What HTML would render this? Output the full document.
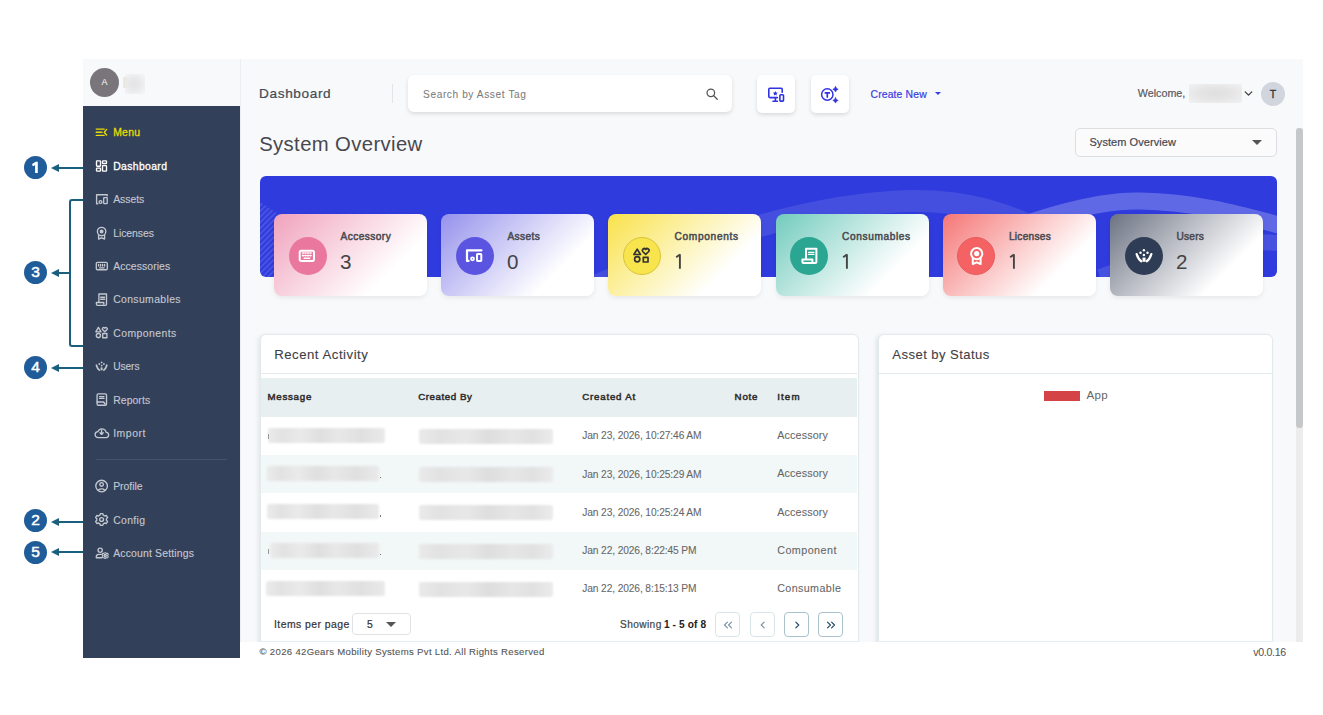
<!DOCTYPE html>
<html><head><meta charset="utf-8">
<style>
*{margin:0;padding:0;box-sizing:border-box}
html,body{width:1323px;height:715px;overflow:hidden;background:#fff;font-family:"Liberation Sans",sans-serif}
.a{position:absolute}
.t{position:absolute;white-space:nowrap;line-height:1}
.bub{position:absolute;left:24px;width:23px;height:23px;border-radius:50%;background:#1f5c99;color:#fff;font-size:15.5px;font-weight:normal;-webkit-text-stroke:.5px #fff;text-align:center;line-height:22px}
.arr{position:absolute;height:2px;background:#1a5f7e}
.head{position:absolute;width:0;height:0;border-top:4px solid transparent;border-bottom:4px solid transparent;border-right:8px solid #1a5f7e}
</style></head><body>

<div class="bub" style="top:155.5px"><svg width="23" height="23" style="position:absolute;left:0;top:0"><path d="M13.8 5.7v11.2h-2.7V9.2l-2.4 1.1-.6-2.2 3.6-2.4z" fill="#fff"/></svg></div>
<div class="head" style="left:51px;top:164px"></div>
<div class="arr" style="left:58px;width:25px;top:167px"></div>
<div class="bub" style="top:261.0px">3</div>
<div class="head" style="left:51px;top:268.5px"></div>
<div class="arr" style="left:58px;width:12px;top:271.5px"></div>
<div class="a" style="left:69px;top:199px;width:14px;height:148px;border:2px solid #1a5f7e;border-right:none;border-radius:3px 0 0 3px"></div>
<div class="bub" style="top:355.5px">4</div>
<div class="head" style="left:51px;top:363.5px"></div>
<div class="arr" style="left:58px;width:25px;top:366.5px"></div>
<div class="bub" style="top:509.0px">2</div>
<div class="head" style="left:51px;top:517.5px"></div>
<div class="arr" style="left:58px;width:25px;top:520.5px"></div>
<div class="bub" style="top:540.5px">5</div>
<div class="head" style="left:51px;top:548px"></div>
<div class="arr" style="left:58px;width:25px;top:551px"></div>
<div class="a" style="left:83px;top:59px;width:157px;height:599px;background:#334059"></div>
<div class="a" style="left:83px;top:59px;width:157px;height:47px;background:#f8f9fb"></div>
<div class="a" style="left:90px;top:68px;width:29px;height:29px;border-radius:50%;background:#7a757b;color:#fff;font-size:9px;text-align:center;line-height:29px">A</div>
<div class="a" style="left:125px;top:74px;width:20px;height:20px;background:radial-gradient(ellipse at 45% 50%,#e3e3e5 0%,#e9e9eb 40%,#f6f7f9 100%)"></div>
<div class="a" style="left:123px;top:77px;width:4px;height:11px;background:#ebe9e6"></div>
<div class="t" style="left:113.18px;top:128.13px;font-size:10.43px;color:#e8dc08;letter-spacing:0.251px;-webkit-text-stroke:0.3px #e8dc08;">Menu</div>
<svg class="a" style="left:92px;top:122px;color:#e8dc08;" width="20" height="20" viewBox="0 0 20 20" fill="none" stroke="currentColor" stroke-width="1.35" stroke-linecap="round" stroke-linejoin="round"><path d="M4.2 7.1h8M4.2 10.2h5.8M4.2 13.3h8M14.6 7.4L12.2 10.2l2.4 2.8"/></svg>
<div class="t" style="left:113.18px;top:161.63px;font-size:10.43px;color:#ffffff;letter-spacing:0.354px;-webkit-text-stroke:0.3px #ffffff;">Dashboard</div>
<svg class="a" style="left:92px;top:156px;color:#ffffff;" width="20" height="20" viewBox="0 0 20 20" fill="none" stroke="currentColor" stroke-width="1.35" stroke-linecap="round" stroke-linejoin="round"><rect x="4.5" y="4.8" width="4" height="5.4" rx=".6"/><rect x="10.5" y="4.8" width="4" height="2.7" rx=".6"/><rect x="4.5" y="12.1" width="4" height="3" rx=".6"/><rect x="10.5" y="9.6" width="4" height="5.5" rx=".6"/></svg>
<div class="t" style="left:113.18px;top:194.93px;font-size:10.43px;color:#c3c8d1;letter-spacing:-0.050px;-webkit-text-stroke:0.12px #c3c8d1;">Assets</div>
<svg class="a" style="left:92px;top:189px;color:#c3c8d1;" width="20" height="20" viewBox="0 0 20 20" fill="none" stroke="currentColor" stroke-width="1.35" stroke-linecap="round" stroke-linejoin="round"><path d="M15.2 6.8V5.7H4.6v9h1.2"/><rect x="11.7" y="8.6" width="3.5" height="6" rx=".5"/><circle cx="8.5" cy="13" r="1.4"/></svg>
<div class="t" style="left:113.18px;top:228.53px;font-size:10.43px;color:#c3c8d1;letter-spacing:-0.044px;-webkit-text-stroke:0.12px #c3c8d1;">Licenses</div>
<svg class="a" style="left:92px;top:223px;color:#c3c8d1;" width="20" height="20" viewBox="0 0 20 20" fill="none" stroke="currentColor" stroke-width="1.35" stroke-linecap="round" stroke-linejoin="round"><circle cx="9.6" cy="8.5" r="4.2"/><circle cx="9.6" cy="8.5" r="1.3" fill="currentColor"/><path d="M6.6 11.8v4.2l3-1.2 3 1.2v-4.2"/></svg>
<div class="t" style="left:113.18px;top:261.93px;font-size:10.43px;color:#c3c8d1;letter-spacing:0.084px;-webkit-text-stroke:0.12px #c3c8d1;">Accessories</div>
<svg class="a" style="left:92px;top:256px;color:#c3c8d1;" width="20" height="20" viewBox="0 0 20 20" fill="none" stroke="currentColor" stroke-width="1.35" stroke-linecap="round" stroke-linejoin="round"><rect x="4.3" y="6.3" width="11" height="7.4" rx="1.2"/><path d="M6.6 8.4v1.6M8.6 8.4v1.6M10.6 8.4v1.6M12.6 8.4v1.6M7.5 11.8h4.6"/></svg>
<div class="t" style="left:113.18px;top:295.33px;font-size:10.43px;color:#c3c8d1;letter-spacing:0.360px;-webkit-text-stroke:0.12px #c3c8d1;">Consumables</div>
<svg class="a" style="left:92px;top:290px;color:#c3c8d1;" width="20" height="20" viewBox="0 0 20 20" fill="none" stroke="currentColor" stroke-width="1.35" stroke-linecap="round" stroke-linejoin="round"><path d="M6.9 12.5V4h7.6v10.3a1 1 0 0 1-1 1H5.6a1.2 1.2 0 0 1-1.2-1.2v-1.6h7.4v1.6"/><path d="M8.7 7.2h3.9M8.7 9.2h3.9"/></svg>
<div class="t" style="left:113.18px;top:328.73px;font-size:10.43px;color:#c3c8d1;letter-spacing:0.449px;-webkit-text-stroke:0.12px #c3c8d1;">Components</div>
<svg class="a" style="left:92px;top:323px;color:#c3c8d1;" width="20" height="20" viewBox="0 0 20 20" fill="none" stroke="currentColor" stroke-width="1.35" stroke-linecap="round" stroke-linejoin="round"><path d="M6.4 4.4L9 8.8H3.8z"/><path d="M12.8 8.8l-2.3-2.2a1.3 1.3 0 0 1 2.3-1.4 1.3 1.3 0 0 1 2.3 1.4z"/><circle cx="6.4" cy="12.6" r="2.1"/><rect x="10.7" y="10.5" width="4.2" height="4.2"/></svg>
<div class="t" style="left:113.19px;top:362.42px;font-size:10.21px;color:#c3c8d1;letter-spacing:-0.080px;-webkit-text-stroke:0.12px #c3c8d1;">Users</div>
<svg class="a" style="left:92px;top:356px;color:#c3c8d1;" width="20" height="20" viewBox="0 0 20 20" fill="none" stroke="currentColor" stroke-width="1.35" stroke-linecap="round" stroke-linejoin="round"><circle cx="9.6" cy="6.4" r=".9" fill="currentColor" stroke="none"/><circle cx="7.3" cy="8" r=".9" fill="currentColor" stroke="none"/><circle cx="11.9" cy="8" r=".9" fill="currentColor" stroke="none"/><circle cx="9.6" cy="9.6" r=".9" fill="currentColor" stroke="none"/><path d="M4.4 9.2Q5.3 12.6 7.4 14.1M14.8 9.2Q13.9 12.6 11.8 14.1" stroke-width="1.7"/><rect x="8.6" y="11.4" width="2" height="2.9" fill="currentColor" stroke="none"/></svg>
<div class="t" style="left:113.18px;top:395.53px;font-size:10.43px;color:#c3c8d1;letter-spacing:0.072px;-webkit-text-stroke:0.12px #c3c8d1;">Reports</div>
<svg class="a" style="left:92px;top:389px;color:#c3c8d1;" width="20" height="20" viewBox="0 0 20 20" fill="none" stroke="currentColor" stroke-width="1.35" stroke-linecap="round" stroke-linejoin="round"><rect x="5.1" y="4.8" width="9.4" height="11.4" rx="1.2"/><path d="M7.6 7.6h4.4M7.6 9.4h4.4M5.1 13h6.5l1.5 2"/></svg>
<div class="t" style="left:113.18px;top:429.13px;font-size:10.43px;color:#c3c8d1;letter-spacing:0.537px;-webkit-text-stroke:0.12px #c3c8d1;">Import</div>
<svg class="a" style="left:92px;top:423px;color:#c3c8d1;" width="20" height="20" viewBox="0 0 20 20" fill="none" stroke="currentColor" stroke-width="1.35" stroke-linecap="round" stroke-linejoin="round"><path d="M6.2 14.6h7.6a2.6 2.6 0 0 0 .4-5.2 4.3 4.3 0 0 0-8.2-.8 3 3 0 0 0 .2 6z"/><path d="M9.6 6.8v4.4M8 9.8l1.6 1.6 1.6-1.6"/></svg>
<div class="t" style="left:113.18px;top:482.13px;font-size:10.43px;color:#c3c8d1;letter-spacing:-0.019px;-webkit-text-stroke:0.12px #c3c8d1;">Profile</div>
<svg class="a" style="left:92px;top:476px;color:#c3c8d1;" width="20" height="20" viewBox="0 0 20 20" fill="none" stroke="currentColor" stroke-width="1.35" stroke-linecap="round" stroke-linejoin="round"><circle cx="9.6" cy="10" r="5.8"/><circle cx="9.6" cy="8.4" r="1.8"/><path d="M6.6 14a3.4 2.2 0 0 1 6 0"/></svg>
<div class="t" style="left:113.18px;top:515.63px;font-size:10.43px;color:#c3c8d1;letter-spacing:0.358px;-webkit-text-stroke:0.12px #c3c8d1;">Config</div>
<svg class="a" style="left:92px;top:509px;color:#c3c8d1;" width="20" height="20" viewBox="0 0 20 20" fill="none" stroke="currentColor" stroke-width="1.35" stroke-linecap="round" stroke-linejoin="round"><circle cx="9.6" cy="10.5" r="1.9"/><path d="M8.4 4.6h2.4l.5 1.6 1.5.8 1.6-.5 1.2 2-1.2 1.2v1.6l1.2 1.2-1.2 2-1.6-.5-1.5.8-.5 1.6H8.4l-.5-1.6-1.5-.8-1.6.5-1.2-2 1.2-1.2V9.7L3.6 8.5l1.2-2 1.6.5 1.5-.8z"/></svg>
<div class="t" style="left:113.18px;top:548.93px;font-size:10.43px;color:#c3c8d1;letter-spacing:0.174px;-webkit-text-stroke:0.12px #c3c8d1;">Account Settings</div>
<svg class="a" style="left:92px;top:543px;color:#c3c8d1;" width="20" height="20" viewBox="0 0 20 20" fill="none" stroke="currentColor" stroke-width="1.35" stroke-linecap="round" stroke-linejoin="round"><circle cx="8.2" cy="7.2" r="2.1"/><path d="M9.5 11.3H6.8a2.5 2.5 0 0 0-2.5 2.5v.9h5.2"/><circle cx="13.2" cy="12.6" r="1.1"/><path d="M13.2 9.6l1.2.75h1.2l.6 1.1-.6 1.15.6 1.1-.6 1.1h-1.2l-1.2.75-1.2-.75h-1.2l-.6-1.1.6-1.1-.6-1.15.6-1.1h1.2z" stroke-width="1.1"/></svg>
<div class="a" style="left:96px;top:459px;width:131px;height:1px;background:#46536a"></div>
<div class="a" style="left:240px;top:59px;width:1063px;height:583px;background:#f8f9fb;overflow:hidden;border-left:1px solid #eceef2"></div>
<div class="t" style="left:259.12px;top:87.02px;font-size:13.62px;color:#464b55;letter-spacing:0.620px;-webkit-text-stroke:0.22px #464b55;">Dashboard</div>
<div class="a" style="left:392px;top:84px;width:1px;height:19px;background:#e2e4e8"></div>
<div class="a" style="left:408px;top:75px;width:324px;height:37px;background:#fff;border-radius:6px;box-shadow:0 2px 4px rgba(0,0,0,.12)"></div>
<div class="t" style="left:423.09px;top:89.88px;font-size:10.14px;color:#7a7a7a;letter-spacing:0.594px;-webkit-text-stroke:0.05px #7a7a7a;">Search by Asset Tag</div>
<svg class="a" style="left:705px;top:87px;color:#555;" width="14" height="14" viewBox="0 0 24 24" fill="none" stroke="currentColor" stroke-width="2.2" stroke-linecap="round" stroke-linejoin="round"><circle cx="10" cy="10" r="6.5"/><path d="M15 15l6 6"/></svg>
<div class="a" style="left:757px;top:75px;width:38px;height:38px;background:#fff;border-radius:5px;box-shadow:0 2px 4px rgba(0,0,0,.12)"></div>
<div class="a" style="left:811px;top:75px;width:38px;height:38px;background:#fff;border-radius:5px;box-shadow:0 2px 4px rgba(0,0,0,.12)"></div>
<svg class="a" style="left:762px;top:82px;color:#2f33e2;" width="28" height="26" viewBox="0 0 28 26" fill="none" stroke="currentColor" stroke-width="1.6" stroke-linecap="round" stroke-linejoin="round"><path d="M15.4 15.6H7.8a1 1 0 0 1-1-1V7.3a1 1 0 0 1 1-1h11.4a1 1 0 0 1 1 1v3"/><path d="M13.4 15.8v3.4M11 19.3h4.4"/><rect x="17.9" y="12.8" width="3.6" height="6.3" rx=".8"/><path d="M13.3 9l.75 1.55 1.7.2-1.25 1.15.35 1.7-1.55-.85-1.55.85.35-1.7-1.25-1.15 1.7-.2z" fill="currentColor" stroke="none"/></svg>
<svg class="a" style="left:816px;top:82px;color:#2f33e2;" width="28" height="26" viewBox="0 0 28 26" fill="none" stroke="currentColor" stroke-width="1.5" stroke-linecap="round" stroke-linejoin="round"><circle cx="11.3" cy="12.5" r="5.7"/><path d="M9.3 10.9h4M11.3 10.9v4.2" stroke-width="1.7"/><path d="M19.5 4.6q.5 2.2 2.7 2.7-2.2.5-2.7 2.7-.5-2.2-2.7-2.7 2.2-.5 2.7-2.7zM19.5 15.7q.5 2.2 2.7 2.7-2.2.5-2.7 2.7-.5-2.2-2.7-2.7 2.2-.5 2.7-2.7z" fill="currentColor" stroke="currentColor" stroke-width=".6"/></svg>
<div class="t" style="left:870.48px;top:89.83px;font-size:10.43px;color:#3a3de0;letter-spacing:0.133px;-webkit-text-stroke:0.2px #3a3de0;">Create New</div>
<div class="a" style="left:935px;top:92px;width:0;height:0;border-left:3px solid transparent;border-right:3px solid transparent;border-top:3px solid #3a3de0"></div>
<div class="t" style="left:1137.86px;top:88.38px;font-size:10.72px;color:#5a5a60;letter-spacing:-0.003px;-webkit-text-stroke:0.2px #5a5a60;">Welcome,</div>
<div class="a" style="left:1189px;top:84px;width:53px;height:19px;background:radial-gradient(ellipse at 50% 50%,#e0dfdf 0%,#e6e5e5 45%,#f1f2f4 100%)"></div>
<svg class="a" style="left:1242px;top:87px;color:#444;" width="13" height="13" viewBox="0 0 24 24" fill="none" stroke="currentColor" stroke-width="2.6" stroke-linecap="round" stroke-linejoin="round"><path d="M6 9l6 6 6-6"/></svg>
<div class="a" style="left:1261px;top:82px;width:24px;height:24px;border-radius:50%;background:#d1d5dd;color:#333;font-size:10.5px;-webkit-text-stroke:.3px #333;text-align:center;line-height:24px">T</div>
<div class="t" style="left:259.19px;top:133.95px;font-size:20.29px;color:#48484f;letter-spacing:0.376px;">System Overview</div>
<div class="a" style="left:1075px;top:128px;width:202px;height:29px;border:1px solid #dcdee2;border-radius:5px;background:#fbfbfc"></div>
<div class="t" style="left:1089.45px;top:137.04px;font-size:11.01px;color:#48484f;letter-spacing:0.064px;-webkit-text-stroke:0.2px #48484f;">System Overview</div>
<div class="a" style="left:1252px;top:140px;width:0;height:0;border-left:5px solid transparent;border-right:5px solid transparent;border-top:5px solid #555"></div>
<div class="a" style="left:1296px;top:128px;width:7px;height:514px;background:#ececec"></div>
<div class="a" style="left:1296px;top:128px;width:7px;height:300px;background:#c6c7c9;border-radius:4px"></div>
<div class="a" style="left:260px;top:176px;width:1017px;height:101px;background:#2f3bdd;border-radius:6px;overflow:hidden"><svg width="1017" height="101" style="position:absolute;left:0;top:0"><defs><pattern id="hp" width="4" height="4" patternUnits="userSpaceOnUse" patternTransform="rotate(45)"><rect width="2" height="4" fill="#fff" fill-opacity=".12"/></pattern></defs><path d="M0 26 L18 38 L18 101 L0 101z" fill="url(#hp)"/><g fill="none" stroke="#fff"><path d="M330 112 C430 70 540 28 650 25 C710 24 745 38 790 58" stroke-opacity=".10" stroke-width="22"/><path d="M700 72 C770 45 830 24 880 25 C940 26 985 40 1030 52" stroke-opacity=".24" stroke-width="17"/><path d="M840 101 C900 80 960 60 1030 68" stroke-opacity=".12" stroke-width="16"/></g></svg></div>
<div class="a" style="left:274px;top:214px;width:153px;height:82px;border-radius:8px;background:linear-gradient(135deg,#f0a2bd 0%,#fff 74%);box-shadow:0 2px 5px rgba(0,0,0,.07)"></div>
<div class="a" style="left:288.5px;top:236.5px;width:38px;height:38px;border-radius:50%;background:#e9779e;"></div>
<svg class="a" style="left:287px;top:235px;color:#fff;" width="40" height="40" viewBox="0 0 40 40" fill="none" stroke="currentColor" stroke-width="1.7" stroke-linecap="round" stroke-linejoin="round"><rect x="12.7" y="15.8" width="14.3" height="10.1" rx="1.6" stroke-width="2"/><path d="M15.5 18h1M18 18h1M20.5 18h1M23 18h1M15.5 20.6h1M18 20.6h1M20.5 20.6h1M23 20.6h1M17.2 23.3h5.4" stroke-width="1.6"/></svg>
<div class="t" style="left:340.49px;top:231.98px;font-size:10.14px;color:#4a4a50;letter-spacing:0.438px;-webkit-text-stroke:0.5px #4a4a50;">Accessory</div>
<div class="t" style="left:339.97px;top:252.01px;font-size:20.58px;color:#444;letter-spacing:0.000px;">3</div>
<div class="a" style="left:441px;top:214px;width:153px;height:82px;border-radius:8px;background:linear-gradient(135deg,#9591ec 0%,#fff 74%);box-shadow:0 2px 5px rgba(0,0,0,.07)"></div>
<div class="a" style="left:455.5px;top:236.5px;width:38px;height:38px;border-radius:50%;background:#5a54e0;"></div>
<svg class="a" style="left:454px;top:235px;color:#fff;" width="40" height="40" viewBox="0 0 40 40" fill="none" stroke="currentColor" stroke-width="1.7" stroke-linecap="round" stroke-linejoin="round"><path d="M27.5 15.3H13v10.6h1.6" stroke-width="2.2"/><rect x="23" y="18.9" width="4.3" height="7" rx=".6" stroke-width="2"/><circle cx="18.5" cy="23.8" r="1.5" stroke-width="1.8"/></svg>
<div class="t" style="left:507.49px;top:231.98px;font-size:10.14px;color:#4a4a50;letter-spacing:0.364px;-webkit-text-stroke:0.5px #4a4a50;">Assets</div>
<div class="t" style="left:506.97px;top:252.01px;font-size:20.58px;color:#444;letter-spacing:0.000px;">0</div>
<div class="a" style="left:608px;top:214px;width:153px;height:82px;border-radius:8px;background:linear-gradient(135deg,#f9e24a 0%,#fff 74%);box-shadow:0 2px 5px rgba(0,0,0,.07)"></div>
<div class="a" style="left:622.5px;top:236.5px;width:38px;height:38px;border-radius:50%;background:#f8e44c;border:1px solid #d7c43a;"></div>
<svg class="a" style="left:621px;top:235px;color:#333;" width="40" height="40" viewBox="0 0 40 40" fill="none" stroke="currentColor" stroke-width="1.7" stroke-linecap="round" stroke-linejoin="round"><path d="M16.2 14.2L19.5 19.5H12.9z"/><path d="M24.7 19.4l-3-2.9a1.8 1.8 0 0 1 3-2.1 1.8 1.8 0 0 1 3 2.1z"/><circle cx="16.2" cy="24.3" r="2.6"/><rect x="22.3" y="22.3" width="4.7" height="4.7"/></svg>
<div class="t" style="left:674.49px;top:231.98px;font-size:10.14px;color:#4a4a50;letter-spacing:0.699px;-webkit-text-stroke:0.5px #4a4a50;">Components</div>
<svg class="a" style="left:672.6px;top:253px" width="10" height="17"><path d="M6.9 1.3V15.8M6.9 1.5L3.2 4.3" fill="none" stroke="#444" stroke-width="1.9" stroke-linecap="butt"/></svg>
<div class="a" style="left:775.5px;top:214px;width:153px;height:82px;border-radius:8px;background:linear-gradient(135deg,#72cbbd 0%,#fff 74%);box-shadow:0 2px 5px rgba(0,0,0,.07)"></div>
<div class="a" style="left:790.0px;top:236.5px;width:38px;height:38px;border-radius:50%;background:#2aa693;"></div>
<svg class="a" style="left:788.5px;top:235px;color:#fff;" width="40" height="40" viewBox="0 0 40 40" fill="none" stroke="currentColor" stroke-width="1.7" stroke-linecap="round" stroke-linejoin="round"><path d="M17 24.5V13.8h10.4v13.2a1 1 0 0 1-1 1H15a1.6 1.6 0 0 1-1.6-1.6v-2h10v2" stroke-width="2"/><path d="M19.5 17.3h5.5M19.5 19.3h5.5" stroke-width="1.3"/></svg>
<div class="t" style="left:841.99px;top:231.98px;font-size:10.14px;color:#4a4a50;letter-spacing:0.629px;-webkit-text-stroke:0.5px #4a4a50;">Consumables</div>
<svg class="a" style="left:840.1px;top:253px" width="10" height="17"><path d="M6.9 1.3V15.8M6.9 1.5L3.2 4.3" fill="none" stroke="#444" stroke-width="1.9" stroke-linecap="butt"/></svg>
<div class="a" style="left:942.5px;top:214px;width:153px;height:82px;border-radius:8px;background:linear-gradient(135deg,#f57676 0%,#fff 74%);box-shadow:0 2px 5px rgba(0,0,0,.07)"></div>
<div class="a" style="left:957.0px;top:236.5px;width:38px;height:38px;border-radius:50%;background:#f46263;border:1px solid #e85a5a;"></div>
<svg class="a" style="left:955.5px;top:235px;color:#fff;" width="40" height="40" viewBox="0 0 40 40" fill="none" stroke="currentColor" stroke-width="1.7" stroke-linecap="round" stroke-linejoin="round"><circle cx="20.7" cy="18.7" r="5.6" stroke-width="2"/><circle cx="20.7" cy="18.7" r="2.6" fill="currentColor" stroke="none"/><path d="M16.8 23v6l3.9-1.7 3.9 1.7v-6" stroke-width="2"/></svg>
<div class="t" style="left:1008.99px;top:231.98px;font-size:10.14px;color:#4a4a50;letter-spacing:0.249px;-webkit-text-stroke:0.5px #4a4a50;">Licenses</div>
<svg class="a" style="left:1007.1px;top:253px" width="10" height="17"><path d="M6.9 1.3V15.8M6.9 1.5L3.2 4.3" fill="none" stroke="#444" stroke-width="1.9" stroke-linecap="butt"/></svg>
<div class="a" style="left:1110px;top:214px;width:153px;height:82px;border-radius:8px;background:linear-gradient(135deg,#6b7282 0%,#fff 74%);box-shadow:0 2px 5px rgba(0,0,0,.07)"></div>
<div class="a" style="left:1124.5px;top:236.5px;width:38px;height:38px;border-radius:50%;background:#2f3c55;"></div>
<svg class="a" style="left:1124px;top:236px;color:#fff;" width="40" height="40" viewBox="0 0 40 40" fill="none" stroke="currentColor" stroke-width="1.7" stroke-linecap="round" stroke-linejoin="round"><circle cx="19.9" cy="14.3" r="1.25" fill="currentColor" stroke="none"/><circle cx="16.5" cy="16.8" r="1.25" fill="currentColor" stroke="none"/><circle cx="23.5" cy="16.8" r="1.25" fill="currentColor" stroke="none"/><circle cx="19.9" cy="19.1" r="1.25" fill="currentColor" stroke="none"/><path d="M12.7 18.1Q14.2 23.2 17.3 25.2M27.3 18.1Q25.8 23.2 22.7 25.2" stroke-width="2.3"/><rect x="18.5" y="21.6" width="3.1" height="4.2" fill="currentColor" stroke="none"/></svg>
<div class="t" style="left:1176.49px;top:231.98px;font-size:10.14px;color:#4a4a50;letter-spacing:0.239px;-webkit-text-stroke:0.5px #4a4a50;">Users</div>
<div class="t" style="left:1175.97px;top:252.01px;font-size:20.58px;color:#444;letter-spacing:0.000px;">2</div>
<div class="a" style="left:260px;top:334px;width:599px;height:320px;background:#fff;border:1px solid #e3eaee;border-radius:6px;box-shadow:-2px 1px 4px rgba(0,0,0,.08)"></div>
<div class="t" style="left:274.14px;top:348.39px;font-size:13.19px;color:#3f3f45;letter-spacing:0.517px;-webkit-text-stroke:0.1px #3f3f45;">Recent Activity</div>
<div class="a" style="left:261px;top:373px;width:596px;height:1px;background:#e3eaee"></div>
<div class="a" style="left:261px;top:378px;width:596px;height:39px;background:#e8eff1"></div>
<div class="t" style="left:267.41px;top:392.35px;font-size:9.71px;color:#2e2e2e;letter-spacing:0.751px;-webkit-text-stroke:0.5px #2e2e2e;">Message</div>
<div class="t" style="left:418.21px;top:392.35px;font-size:9.71px;color:#2e2e2e;letter-spacing:0.570px;-webkit-text-stroke:0.5px #2e2e2e;">Created By</div>
<div class="t" style="left:582.31px;top:392.35px;font-size:9.71px;color:#2e2e2e;letter-spacing:0.780px;-webkit-text-stroke:0.5px #2e2e2e;">Created At</div>
<div class="t" style="left:734.61px;top:392.35px;font-size:9.71px;color:#2e2e2e;letter-spacing:0.760px;-webkit-text-stroke:0.5px #2e2e2e;">Note</div>
<div class="t" style="left:777.21px;top:392.35px;font-size:9.71px;color:#2e2e2e;letter-spacing:1.135px;-webkit-text-stroke:0.5px #2e2e2e;">Item</div>
<div class="a" style="left:268px;top:428.0px;width:117px;height:15px;background:linear-gradient(90deg,#ebebeb,#e2e2e2 12%,#eaeaea 28%,#dfdfdf 45%,#e8e8e8 60%,#e0e0e0 80%,#eaeaea);filter:blur(1.3px);border-radius:2px"></div>
<div class="a" style="left:419px;top:429.0px;width:134px;height:15px;background:linear-gradient(90deg,#eaeaea,#e2e2e2 15%,#e8e8e8 35%,#dedede 52%,#e6e6e6 70%,#e1e1e1 85%,#ebebeb);filter:blur(1.3px);border-radius:2px"></div>
<div class="a" style="left:267.5px;top:434.0px;width:1.2px;height:5px;background:#999"></div>
<div class="t" style="left:582.29px;top:431.32px;font-size:10.22px;color:#666;letter-spacing:0.000px;-webkit-text-stroke:0.08px #666;letter-spacing:-0.12px;">Jan 23, 2026, 10:27:46 AM</div>
<div class="t" style="left:777.16px;top:430.18px;font-size:10.72px;color:#666;letter-spacing:0.162px;-webkit-text-stroke:0.08px #666;">Accessory</div>
<div class="a" style="left:261px;top:455.2px;width:596px;height:38.2px;background:#f2f7f7"></div>
<div class="a" style="left:267px;top:466.2px;width:112px;height:15px;background:linear-gradient(90deg,#ebebeb,#e2e2e2 12%,#eaeaea 28%,#dfdfdf 45%,#e8e8e8 60%,#e0e0e0 80%,#eaeaea);filter:blur(1.3px);border-radius:2px"></div>
<div class="a" style="left:419px;top:467.2px;width:134px;height:15px;background:linear-gradient(90deg,#eaeaea,#e2e2e2 15%,#e8e8e8 35%,#dedede 52%,#e6e6e6 70%,#e1e1e1 85%,#ebebeb);filter:blur(1.3px);border-radius:2px"></div>
<div class="a" style="left:379.5px;top:477.2px;width:1.3px;height:1.3px;background:#777"></div>
<div class="t" style="left:582.29px;top:469.52px;font-size:10.22px;color:#666;letter-spacing:0.000px;-webkit-text-stroke:0.08px #666;letter-spacing:-0.12px;">Jan 23, 2026, 10:25:29 AM</div>
<div class="t" style="left:777.16px;top:468.38px;font-size:10.72px;color:#666;letter-spacing:0.162px;-webkit-text-stroke:0.08px #666;">Accessory</div>
<div class="a" style="left:267px;top:504.4px;width:112px;height:15px;background:linear-gradient(90deg,#ebebeb,#e2e2e2 12%,#eaeaea 28%,#dfdfdf 45%,#e8e8e8 60%,#e0e0e0 80%,#eaeaea);filter:blur(1.3px);border-radius:2px"></div>
<div class="a" style="left:419px;top:505.4px;width:134px;height:15px;background:linear-gradient(90deg,#eaeaea,#e2e2e2 15%,#e8e8e8 35%,#dedede 52%,#e6e6e6 70%,#e1e1e1 85%,#ebebeb);filter:blur(1.3px);border-radius:2px"></div>
<div class="a" style="left:379.5px;top:515.4px;width:1.3px;height:1.3px;background:#777"></div>
<div class="t" style="left:582.29px;top:507.72px;font-size:10.22px;color:#666;letter-spacing:0.000px;-webkit-text-stroke:0.08px #666;letter-spacing:-0.12px;">Jan 23, 2026, 10:25:24 AM</div>
<div class="t" style="left:777.16px;top:506.58px;font-size:10.72px;color:#666;letter-spacing:0.162px;-webkit-text-stroke:0.08px #666;">Accessory</div>
<div class="a" style="left:261px;top:531.6px;width:596px;height:38.2px;background:#f2f7f7"></div>
<div class="a" style="left:270px;top:542.6px;width:109px;height:15px;background:linear-gradient(90deg,#ebebeb,#e2e2e2 12%,#eaeaea 28%,#dfdfdf 45%,#e8e8e8 60%,#e0e0e0 80%,#eaeaea);filter:blur(1.3px);border-radius:2px"></div>
<div class="a" style="left:419px;top:543.6px;width:134px;height:15px;background:linear-gradient(90deg,#eaeaea,#e2e2e2 15%,#e8e8e8 35%,#dedede 52%,#e6e6e6 70%,#e1e1e1 85%,#ebebeb);filter:blur(1.3px);border-radius:2px"></div>
<div class="a" style="left:267.5px;top:548.6px;width:1.2px;height:5px;background:#999"></div>
<div class="a" style="left:379.5px;top:553.6px;width:1.3px;height:1.3px;background:#777"></div>
<div class="t" style="left:582.29px;top:545.92px;font-size:10.22px;color:#666;letter-spacing:0.000px;-webkit-text-stroke:0.08px #666;letter-spacing:-0.12px;">Jan 22, 2026, 8:22:45 PM</div>
<div class="t" style="left:777.16px;top:544.78px;font-size:10.72px;color:#666;letter-spacing:0.479px;-webkit-text-stroke:0.08px #666;">Component</div>
<div class="a" style="left:265.5px;top:580.8px;width:119px;height:15px;background:linear-gradient(90deg,#ebebeb,#e2e2e2 12%,#eaeaea 28%,#dfdfdf 45%,#e8e8e8 60%,#e0e0e0 80%,#eaeaea);filter:blur(1.3px);border-radius:2px"></div>
<div class="a" style="left:419px;top:581.8px;width:134px;height:15px;background:linear-gradient(90deg,#eaeaea,#e2e2e2 15%,#e8e8e8 35%,#dedede 52%,#e6e6e6 70%,#e1e1e1 85%,#ebebeb);filter:blur(1.3px);border-radius:2px"></div>
<div class="t" style="left:582.29px;top:584.12px;font-size:10.22px;color:#666;letter-spacing:0.000px;-webkit-text-stroke:0.08px #666;letter-spacing:-0.12px;">Jan 22, 2026, 8:15:13 PM</div>
<div class="t" style="left:777.16px;top:582.98px;font-size:10.72px;color:#666;letter-spacing:0.396px;-webkit-text-stroke:0.08px #666;">Consumable</div>
<div class="t" style="left:273.98px;top:619.93px;font-size:10.43px;color:#333;letter-spacing:0.454px;-webkit-text-stroke:0.2px #333;">Items per page</div>
<div class="a" style="left:352px;top:613px;width:59px;height:22px;border:1px solid #dfe3e6;border-radius:4px;background:#fff"></div>
<div class="t" style="left:366.88px;top:619.93px;font-size:10.43px;color:#333;letter-spacing:0.000px;-webkit-text-stroke:0.2px #333;">5</div>
<div class="a" style="left:386px;top:622px;width:0;height:0;border-left:5px solid transparent;border-right:5px solid transparent;border-top:5px solid #555"></div>
<div class="t" style="left:620.09px;top:619.78px;font-size:10.14px;color:#444;letter-spacing:0.394px;-webkit-text-stroke:0.2px #444;">Showing</div>
<div class="t" style="left:663.89px;top:619.78px;font-size:10.14px;color:#222;letter-spacing:0.137px;font-weight:bold;">1 - 5 of 8</div>
<div class="a" style="left:715px;top:612px;width:25px;height:25px;border:1px solid #d8e6ea;border-radius:4px;background:#fff"></div>
<svg class="a" style="left:720.5px;top:617.5px;color:#7d93a3;" width="14" height="14" viewBox="0 0 24 24" fill="none" stroke="currentColor" stroke-width="2" stroke-linecap="round" stroke-linejoin="round"><path d="M11 7l-5 5 5 5M18 7l-5 5 5 5"/></svg>
<div class="a" style="left:750px;top:612px;width:25px;height:25px;border:1px solid #d8e6ea;border-radius:4px;background:#fff"></div>
<svg class="a" style="left:755.5px;top:617.5px;color:#7d93a3;" width="14" height="14" viewBox="0 0 24 24" fill="none" stroke="currentColor" stroke-width="2" stroke-linecap="round" stroke-linejoin="round"><path d="M14 7l-5 5 5 5"/></svg>
<div class="a" style="left:784px;top:612px;width:25px;height:25px;border:1px solid #a9c3ce;border-radius:4px;background:#fff"></div>
<svg class="a" style="left:789.5px;top:617.5px;color:#264866;" width="14" height="14" viewBox="0 0 24 24" fill="none" stroke="currentColor" stroke-width="2" stroke-linecap="round" stroke-linejoin="round"><path d="M10 7l5 5-5 5"/></svg>
<div class="a" style="left:818px;top:612px;width:25px;height:25px;border:1px solid #a9c3ce;border-radius:4px;background:#fff"></div>
<svg class="a" style="left:823.5px;top:617.5px;color:#264866;" width="14" height="14" viewBox="0 0 24 24" fill="none" stroke="currentColor" stroke-width="2" stroke-linecap="round" stroke-linejoin="round"><path d="M6 7l5 5-5 5M13 7l5 5-5 5"/></svg>
<div class="a" style="left:878px;top:334px;width:395px;height:320px;background:#fff;border:1px solid #e3eaee;border-radius:6px;box-shadow:-2px 1px 4px rgba(0,0,0,.09)"></div>
<div class="t" style="left:892.35px;top:348.21px;font-size:13.04px;color:#3f3f45;letter-spacing:0.455px;-webkit-text-stroke:0.1px #3f3f45;">Asset by Status</div>
<div class="a" style="left:879px;top:373px;width:393px;height:1px;background:#e3eaee"></div>
<div class="a" style="left:1044px;top:391px;width:36px;height:9.5px;background:#d44345"></div>
<div class="t" style="left:1086.42px;top:390.04px;font-size:11.59px;color:#666;letter-spacing:0.301px;">App</div>
<div class="a" style="left:240px;top:642px;width:1063px;height:16px;background:#fff"></div>
<div class="a" style="left:260px;top:641px;width:599px;height:1px;background:#e6ecef"></div>
<div class="a" style="left:878px;top:641px;width:395px;height:1px;background:#e6ecef"></div>
<div class="t" style="left:259.52px;top:647.27px;font-size:9.57px;color:#555;letter-spacing:0.319px;-webkit-text-stroke:0.1px #555;">© 2026 42Gears Mobility Systems Pvt Ltd. All Rights Reserved</div>
<div class="t" style="left:1253.27px;top:647.31px;font-size:10.58px;color:#555;letter-spacing:0.000px;-webkit-text-stroke:0.05px #555;letter-spacing:-0.3px;">v0.0.16</div>
</body></html>
